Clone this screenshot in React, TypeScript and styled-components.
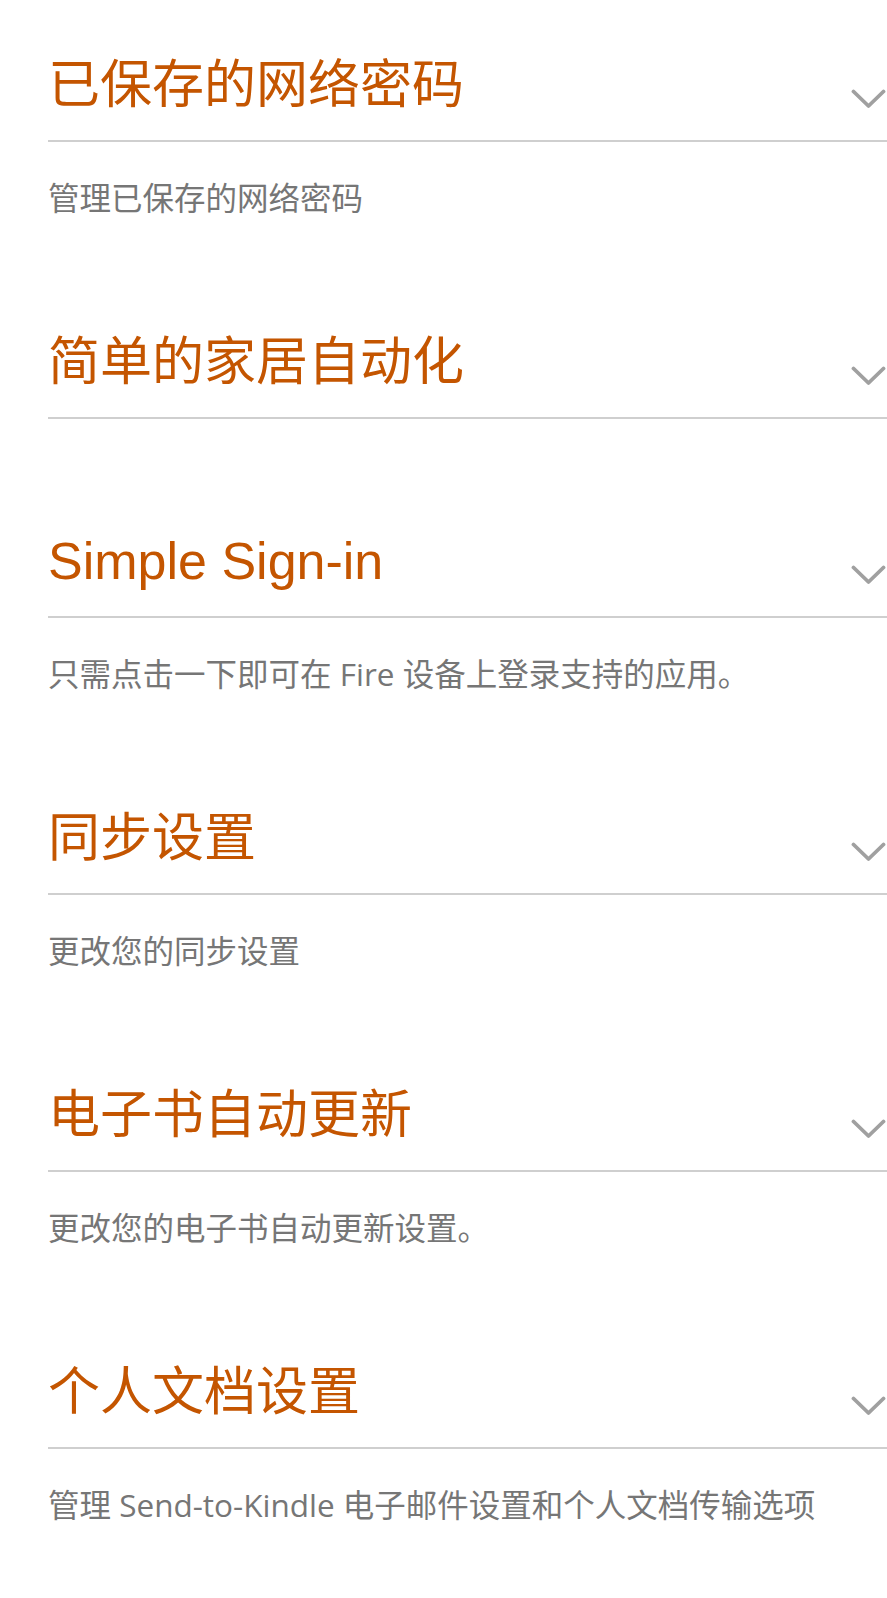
import * as React from 'react';

import styled, { createGlobalStyle } from 'styled-components';

const GlobalStyle = createGlobalStyle`
  html, body {
    margin: 0;
    padding: 0;
    background: #ffffff;
  }
`;

const Page = styled.main`
  display: flex;
  flex-direction: column;
  padding: 54px 0 60px 48px;
  font-family: "Liberation Sans", Arial, "Noto Sans CJK SC", sans-serif;
`;

const Section = styled.section`
  display: flex;
  flex-direction: column;

  & + & {
    margin-top: 111px;
  }
`;

const SectionHeader = styled.div`
  display: flex;
  align-items: flex-end;
  justify-content: space-between;
  padding-bottom: 24px;
  border-bottom: 2px solid #cfcfcf;
  cursor: pointer;
`;

const Heading = styled.h2`
  margin: 0;
  font-size: 52px;
  line-height: 62px;
  font-weight: 400;
  color: #c45500;
`;

const Chevron = styled.svg`
  width: 35px;
  height: 20px;
  margin-bottom: 7px;
  margin-right: 1px;
  flex-shrink: 0;
`;

const Description = styled.p`
  margin: 36px 0 2px;
  font-family: "Open Sans", "Noto Sans CJK SC", sans-serif;
  font-size: 31.5px;
  line-height: 40px;
  color: #767676;
`;

type SettingItem = {
  title: string;
  description?: string;
};

const settings: SettingItem[] = [
  { title: '已保存的网络密码', description: '管理已保存的网络密码' },
  { title: '简单的家居自动化' },
  { title: 'Simple Sign-in', description: '只需点击一下即可在 Fire 设备上登录支持的应用。' },
  { title: '同步设置', description: '更改您的同步设置' },
  { title: '电子书自动更新', description: '更改您的电子书自动更新设置。' },
  { title: '个人文档设置', description: '管理 Send-to-Kindle 电子邮件设置和个人文档传输选项' },
];

const ChevronDown = () => (
  <Chevron viewBox="0 0 35 20" fill="none">
    <path
      d="M2.5 2.5 L17.5 17 L32.5 2.5"
      stroke="#a0a0a0"
      strokeWidth="3.8"
      strokeLinecap="round"
      strokeLinejoin="round"
    />
  </Chevron>
);

export default function App() {
  return (
    <>
      <GlobalStyle />
      <Page>
        {settings.map((item) => (
          <Section key={item.title}>
            <SectionHeader>
              <Heading>{item.title}</Heading>
              <ChevronDown />
            </SectionHeader>
            {item.description && <Description>{item.description}</Description>}
          </Section>
        ))}
      </Page>
    </>
  );
}
